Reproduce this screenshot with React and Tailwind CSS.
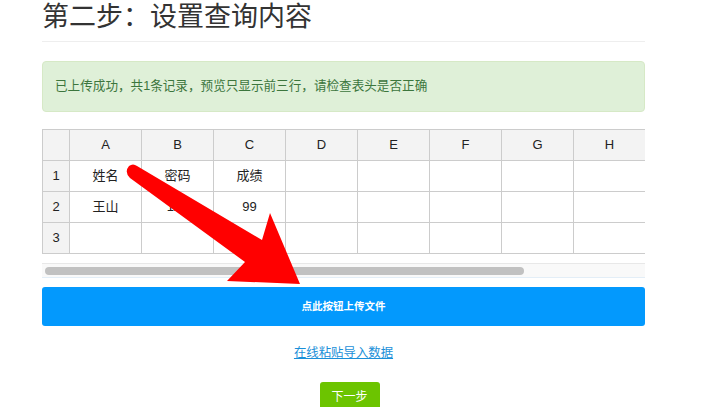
import React from "react";

const cols = ["A", "B", "C", "D", "E", "F", "G", "H"];
const rows = [
  ["姓名", "密码", "成绩"],
  ["王山", "123", "99"],
  [],
];

export default function App() {
  return (
    <div
      className="relative w-[726px] h-[407px] overflow-hidden bg-white"
      style={{ fontFamily: '"Liberation Sans", "Noto Sans CJK SC", sans-serif' }}
    >
      <div className="ml-[42px] w-[603px]">
        <h1 className="text-[27px] leading-[30px] pt-[2px] pb-[9px] border-b border-[#eeeeee] text-[#333] font-normal">
          第二步：设置查询内容
        </h1>
        <div className="mt-[19px] h-[51px] rounded-[4px] border border-[#d6e9c6] bg-[#dff0d8] text-[#3c763d] text-[12.6px] flex items-center px-[12px]">
          已上传成功，共1条记录，预览只显示前三行，请检查表头是否正确
        </div>
        <div className="mt-[17px] w-[603px] overflow-hidden">
          <table className="border-collapse text-[13px] text-[#222] table-fixed w-[604px]">
            <colgroup>
              <col className="w-[27px]" />
              {cols.map((c) => (
                <col key={c} className="w-[72px]" />
              ))}
            </colgroup>
            <thead>
              <tr className="h-[31px] bg-[#f3f3f3]">
                <th className="border border-[#cccccc] font-normal"></th>
                {cols.map((c) => (
                  <th key={c} className="border border-[#cccccc] font-normal text-center">
                    {c}
                  </th>
                ))}
              </tr>
            </thead>
            <tbody>
              {rows.map((r, i) => (
                <tr key={i} className="h-[31px]">
                  <td className="border border-[#cccccc] bg-[#f3f3f3] text-center">{i + 1}</td>
                  {cols.map((c, j) => (
                    <td key={c} className="border border-[#cccccc] text-center">
                      {r[j] || ""}
                    </td>
                  ))}
                </tr>
              ))}
            </tbody>
          </table>
        </div>
        <div className="mt-[9px] h-[15px] border-t border-b border-t-[#e8e8e8] border-b-[#e3eef7] bg-[#f9f9f9] flex items-center pl-[3px]">
          <div className="h-[8px] w-[479px] rounded-full bg-[#c1c1c1]"></div>
        </div>
        <button className="mt-[9px] w-[603px] h-[39px] rounded-[3px] bg-[#0399fd] text-white text-[10.5px] font-bold flex items-center justify-center">
          点此按钮上传文件
        </button>
        <div className="mt-[20px] flex justify-center">
          <a className="text-[12.4px] leading-[15px] text-[#1a8fd8] underline" href="#">
            在线粘贴导入数据
          </a>
        </div>
        <div className="mt-[21px] flex justify-center">
          <button className="w-[60px] h-[30px] rounded-[3px] bg-[#6cc400] text-white text-[12px] flex items-start justify-center pt-[6px] translate-x-[6px]">
            下一步
          </button>
        </div>
      </div>
      <svg className="absolute left-0 top-0 pointer-events-none" width="726" height="407">
        <path
          d="M129 166 Q124 172 130 178 L245 262 L227 281 L300 284 L270 213 L262 240 L137 166 Q133 163 129 166 Z"
          fill="#ff0000"
        />
      </svg>
    </div>
  );
}
